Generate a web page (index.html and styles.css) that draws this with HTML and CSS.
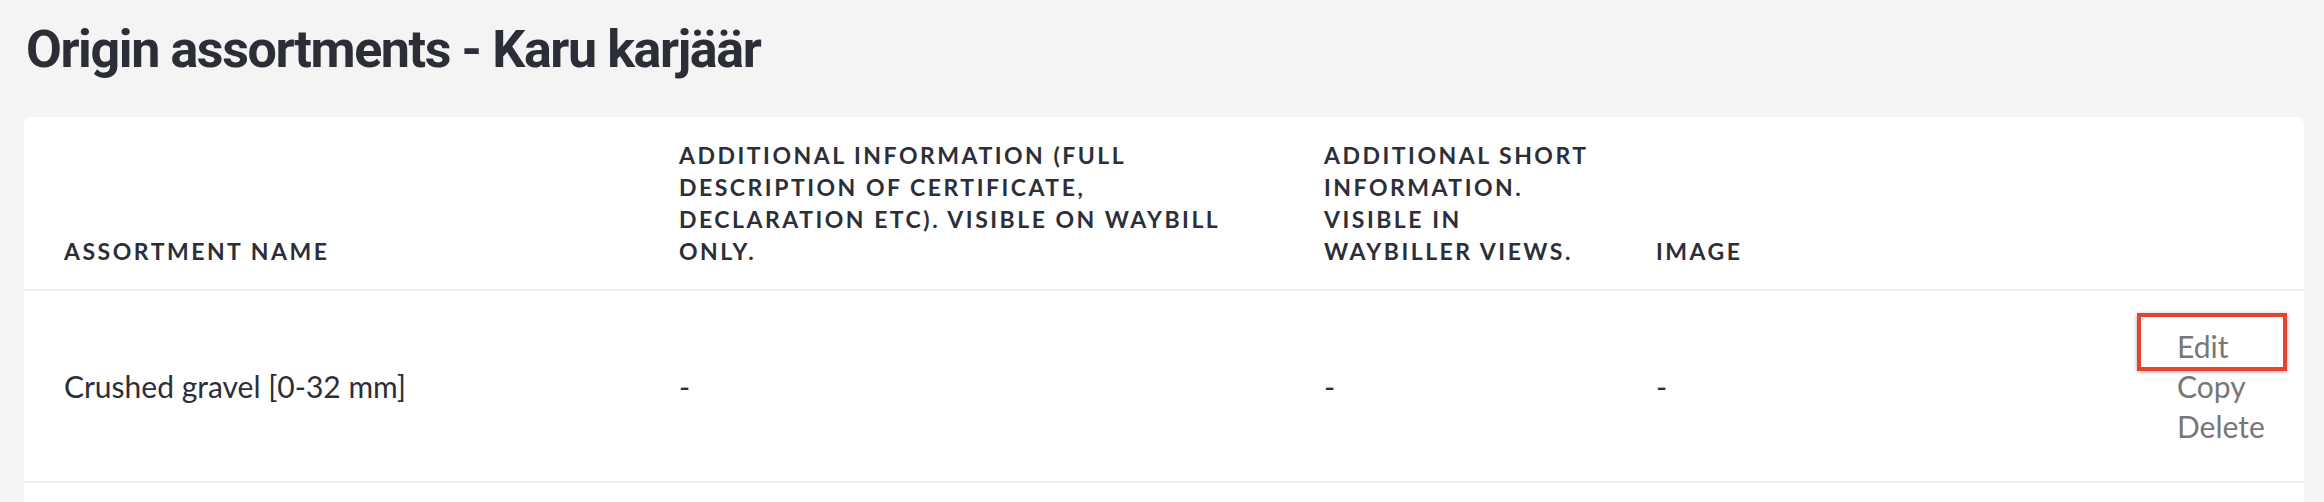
FILE: index.html
```html
<!DOCTYPE html>
<html lang="en">
<head>
    <meta charset="UTF-8" />
    <meta name="viewport" content="width=device-width, initial-scale=1.0"/>
    <title>Origin assortments - Karu karjäär</title>
    <link rel="stylesheet" href="styles.css">
</head>
<body>
<div class="page">
    <h1 class="page-title">Origin assortments - Karu karjäär</h1>

    <div class="card">
        <table class="assortments">
            <colgroup>
                <col class="col-name">
                <col class="col-info">
                <col class="col-short">
                <col class="col-image">
                <col class="col-actions">
            </colgroup>
            <thead>
                <tr>
                    <th>Assortment name</th>
                    <th>Additional information (full description of certificate, declaration etc). Visible on waybill only.</th>
                    <th>Additional short information. Visible in waybiller views.</th>
                    <th>Image</th>
                    <th></th>
                </tr>
            </thead>
            <tbody>
                <tr>
                    <td>Crushed gravel [0-32 mm]</td>
                    <td>-</td>
                    <td>-</td>
                    <td>-</td>
                    <td class="actions">
                        <a href="#" class="highlighted">Edit</a>
                        <a href="#">Copy</a>
                        <a href="#">Delete</a>
                    </td>
                </tr>
            </tbody>
        </table>
    </div>
</div>
</body>
</html>
```

FILE: styles.css
```css
body {
    margin: 0;
    font-family: Lato, "Open Sans", sans-serif;
    background: #f4f4f4;
    color: #2c2f39;
}

.page {
    padding: 0 20px 0 24px;
}

.page-title {
    font-family: Roboto, Arial, sans-serif;
    font-size: 52px;
    font-weight: 700;
    line-height: 60px;
    letter-spacing: -1.4px;
    margin: 20px 0 37px 2px;
    color: #2b2e37;
}

.card {
    background: white;
    border-radius: 8px;
    padding-bottom: 40px;
}

.assortments {
    width: 100%;
    table-layout: fixed;
    border-collapse: collapse;
}

.col-name { width: 615px; }
.col-info { width: 645px; }
.col-short { width: 332px; }
.col-image { width: 521px; }

.assortments th {
    text-align: left;
    vertical-align: bottom;
    text-transform: uppercase;
    font-size: 23px;
    font-weight: 700;
    line-height: 32px;
    letter-spacing: 2.5px;
    padding: 22px 16px 22px 40px;
    border-bottom: 2px solid #f0f0f0;
}

.assortments td {
    font-size: 30px;
    line-height: 40px;
    vertical-align: middle;
    padding: 35px 16px 35px 40px;
    border-bottom: 2px solid #f0f0f0;
}

.actions a {
    display: block;
    color: #777777;
    text-decoration: none;
}

.actions a.highlighted {
    position: relative;
}

/* red marker drawn over the edit link */
.actions a.highlighted::after {
    content: "";
    position: absolute;
    left: -40px;
    top: -13px;
    width: 150px;
    height: 58px;
    box-sizing: border-box;
    border: 4px solid #e4462d;
    box-shadow: 0 1px 4px rgba(0, 0, 0, 0.35);
}
```
